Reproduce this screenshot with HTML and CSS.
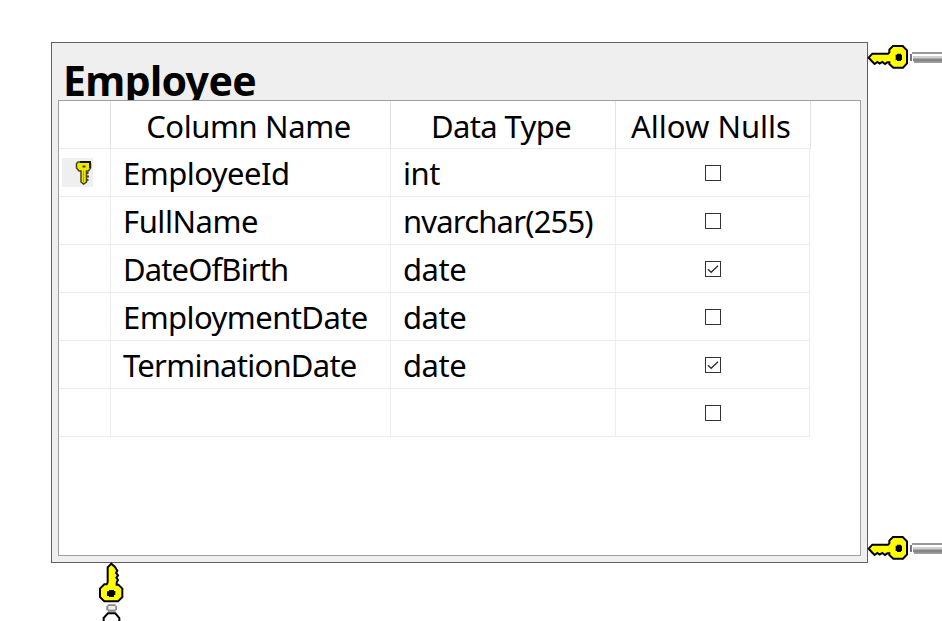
FILE: index.html
```
<!DOCTYPE html>
<html lang="en">
<head>
<meta charset="utf-8">
<title>Employee</title>
<link rel="stylesheet" href="styles.css">
</head>
<body>
<svg class="defs" width="0" height="0" aria-hidden="true">
  <symbol id="key-right" viewBox="0 0 240 120">
    <path d="M20 65 L31 53 H78 L82 49 V41 L93 30 H122 L135 43 V82 L123 95 H94 L82 84 V79 H76L69 84 L61 78 L53 83 L46 78 L38 84 L29 75Z" fill="#ff0" stroke="#000" stroke-width="6"/>
    <path d="M105 53H117V56H120V72H117V75H105V72H101V56H105Z" fill="#000"/>
    <path d="M144 54h6v21h-6z" fill="#777"/>
    <path d="M150 48h90v6h-90z" fill="#999"/>
    <path d="M153 54h87v6h-87z" fill="#fff"/>
    <path d="M153 60h87v7h-87z" fill="#d0d0d0"/>
    <path d="M153 67h87v9h-87z" fill="#858585"/>
    <path d="M156 76h84v4h-84z" fill="#707070"/>
  </symbol>
</svg>
<main class="diagram">
  <section class="entity">
    <h1 class="title"><span>Employee</span></h1>
    <div class="panel">
      <div class="row head"><div></div><div><span class="h-name">Column Name</span></div><div><span class="h-type">Data Type</span></div><div><span class="h-null">Allow Nulls</span></div></div>
      <div class="row"><div class="marker"><div class="chip">
        <svg width="30" height="28" viewBox="0 0 30 28"><path d="M14.5 5.5L16 4H27L28.500 5.500V10L26.500 13H24.500V24L21.500 26L19 24V13H17L14.500 10Z" fill="#f0e800" stroke="#44442a" stroke-width="1.5"/><path d="M18 4H28V10" fill="none" stroke="#111" stroke-width="1.8"/><path d="M20.500 7.500h3v2h-3zM24.500 14h2v2h-2zM25 17.500h2v2h-2zM24.500 21h2v2h-2z" fill="#44442a"/><path d="M21.500 13V24" stroke="#a8a200"/></svg>
      </div></div><div><span class="n1">EmployeeId</span></div><div><span class="t-int">int</span></div><div><i class="box"></i></div></div>
      <div class="row"><div></div><div><span class="n2">FullName</span></div><div><span class="t-var">nvarchar(255)</span></div><div><i class="box"></i></div></div>
      <div class="row"><div></div><div><span class="n3">DateOfBirth</span></div><div><span class="t-date">date</span></div><div><i class="box"><svg viewBox="0 0 14 14"><path d="M2 7.2L5.2 10.2L12 3.8" fill="none" stroke="#333" stroke-width="1.4"/></svg></i></div></div>
      <div class="row"><div></div><div><span class="n4">EmploymentDate</span></div><div><span class="t-date">date</span></div><div><i class="box"></i></div></div>
      <div class="row"><div></div><div><span class="n5">TerminationDate</span></div><div><span class="t-date">date</span></div><div><i class="box"><svg viewBox="0 0 14 14"><path d="M2 7.2L5.2 10.2L12 3.8" fill="none" stroke="#333" stroke-width="1.4"/></svg></i></div></div>
      <div class="row"><div></div><div></div><div></div><div><i class="box"></i></div></div>
    </div>
  </section>
  <svg class="link link-top"><use href="#key-right"/></svg>
  <svg class="link link-bottom"><use href="#key-right"/></svg>
  <svg class="link-down" viewBox="0 0 150 213">
    <path d="M64 41L53 52V97L50 103H43L30 116V141L43 154H84L97 141V116L85 104H80V97L84 90L79 83L84 76L78 69L82 62L75 51Z" fill="#ff0" stroke="#000" stroke-width="6"/>
    <path d="M57 120h15v3h4v12h-4v6h-15v-3h-6v-14h6z" fill="#000"/>
    <path d="M53 163H77V167H81V181H77V185H53V181H49V167H53Z" fill="#888"/>
    <path d="M55 168h21v11H55z" fill="#eee"/>
    <path d="M41 213V204L54 190H76L88 204V213" fill="#fff" stroke="#000" stroke-width="6"/>
  </svg>
</main>
</body>
</html>
```
FILE: styles.css
```
* { box-sizing: border-box; }
body { margin: 0; background: #fff; color: #000; font-family: "Noto Sans", "Open Sans", sans-serif; }
.defs { position: absolute; }
.diagram { position: relative; width: 942px; height: 621px; overflow: hidden; padding: 42px 0 0 51px; }
.entity { width: 817px; height: 521px; padding: 0 6px; border: 1px solid #606060; background: #efefef; }
.title { height: 57px; margin: 0; padding: 9px 0 0 5px; font-size: 41px; line-height: 56px; font-weight: 700; letter-spacing: -0.65px; white-space: nowrap; }
.panel { position: relative; width: 803px; height: 456px; border: 1px solid #a0a0a0; background: #fff; }
.row { display: grid; grid-template-columns: 52px 280px 225px 194px; grid-template-rows: 48px; width: 751px; height: 48px; font-size: 31px; line-height: 48px; white-space: nowrap; }
.row > div { display: flex; min-width: 0; border-right: 1px solid #ededed; border-bottom: 1px solid #ededed; padding-left: 12px; }
.row > div:last-child { justify-content: center; align-items: center; padding: 0 0 0 1px; }
.row > .marker { padding: 9px 0 0 3px; }
.row.head { grid-template-columns: 52px 280px 225px 195px; width: 752px; line-height: 50px; }
.row.head > div, .row.head > div:last-child { justify-content: center; align-items: flex-start; padding: 0 4px 0 0; border-right-color: #e2e2e2; }
.h-name { letter-spacing: -0.4px; }
.h-type { letter-spacing: -0.6px; }
.n1 { letter-spacing: -0.53px; }
.n2 { letter-spacing: -0.45px; }
.n3 { letter-spacing: -0.87px; }
.n4 { letter-spacing: -0.57px; }
.n5 { letter-spacing: -0.74px; }
.t-int, .t-date { letter-spacing: -0.5px; }
.t-var { letter-spacing: -0.82px; }
.chip { width: 31px; height: 29px; background: #efefef; }
.chip svg { display: block; }
.box { display: block; width: 16px; height: 16px; border: 1px solid #333; background: #fff; }
.box svg { display: block; width: 14px; height: 14px; }
.link { position: absolute; left: 862px; width: 80px; height: 40px; }
.link-top { top: 36px; }
.link-bottom { top: 527px; }
.link-down { position: absolute; left: 90px; top: 550px; width: 50px; height: 71px; }
```
